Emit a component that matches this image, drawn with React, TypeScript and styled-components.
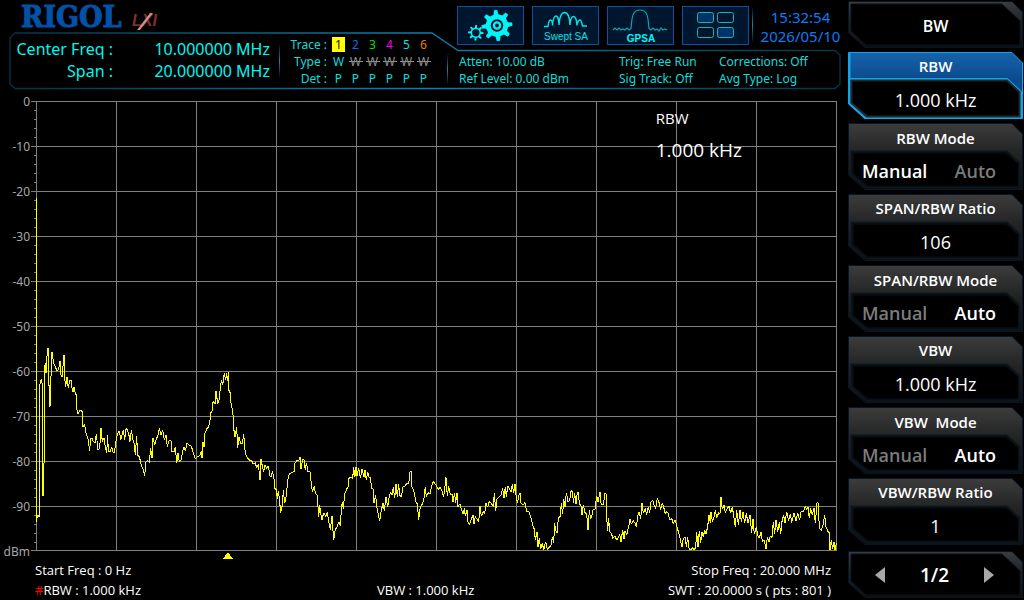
import React from 'react';
import styled, { createGlobalStyle, css } from 'styled-components';

const GlobalStyle = createGlobalStyle`
  * { box-sizing: border-box; }
  body {
    margin: 0;
    background: #000;
    color: #fff;
    font-family: 'Noto Sans', 'Open Sans', sans-serif;
  }
  button { font: inherit; color: inherit; cursor: pointer; }
`;

const Screen = styled.div`
  display: flex;
  min-height: 100vh;
  background: #000;
`;

const Main = styled.main`
  flex: 1;
  min-width: 0;
`;

/* ---------- header ---------- */

const Header = styled.header`
  position: relative;
  display: flex;
  height: 93px;
`;

const PanelFrame = styled.svg`
  position: absolute;
  top: 32px;
  left: 9px;
  width: calc(100% - 16px);
  height: 58px;
  pointer-events: none;
`;

const HeaderLeft = styled.div`
  width: 457px;
  flex: none;
`;

const HeaderRight = styled.div`
  flex: 1;
  min-width: 0;
`;

const Brand = styled.div`
  display: flex;
  align-items: flex-end;
  gap: 10px;
  height: 33px;
  padding: 0 0 0 21px;
`;

const BrandName = styled.span`
  font: bold 30px/33px 'DejaVu Serif Condensed', 'DejaVu Serif', serif;
  color: #0451a8;
  -webkit-text-stroke: 1px #0451a8;
`;

const LxiLogo = styled.svg`
  width: 26px;
  height: 18px;
  margin-bottom: 2px;
`;

const LeftInfo = styled.div`
  display: flex;
  align-items: flex-start;
  color: #00f6f0;
`;

const FreqList = styled.dl`
  display: grid;
  grid-template-columns: 113px 157px;
  margin: 5px 0 0;
  font-size: 16px;
  line-height: 22px;
  text-align: right;
  white-space: nowrap;

  dt, dd { margin: 0; }
`;

const Divider = styled.div<{ $h: number }>`
  width: 1px;
  height: ${(p) => p.$h}px;
  background: linear-gradient(#001018, #1a86b0, #001018);
`;

const FreqDivider = styled(Divider)`
  margin: 12px 0 0 9px;
`;

const TraceDivider = styled(Divider)`
  margin: 22px 0 0 15px;
`;

const TraceTable = styled.table`
  width: 152px;
  margin: 3px 0 0;
  table-layout: fixed;
  border-collapse: collapse;
  font-size: 12px;
  line-height: 15px;
  color: #10dcdc;

  th, td { padding: 0; height: 17px; font-weight: 400; text-align: center; }
  tr > th:first-child { width: 50px; padding-right: 3px; text-align: right; white-space: nowrap; }
`;

const TraceNumber = styled.span<{ $color: string; $active?: boolean }>`
  display: block;
  width: 13px;
  margin: 0 auto;
  color: ${(p) => p.$color};
  ${(p) => p.$active && css`background: #ffff00;`}
`;

const TraceType = styled.span<{ $off?: boolean }>`
  position: relative;
  display: block;
  ${(p) => p.$off && css`
    color: #909090;
    &::after {
      content: '';
      position: absolute;
      top: 7px;
      left: 2px;
      right: 1px;
      height: 1px;
      background: #909090;
    }
  `}
`;

const TopBar = styled.div`
  display: flex;
  align-items: flex-start;
  height: 52px;
  padding-top: 6px;
`;

const Tools = styled.nav`
  display: flex;
  gap: 8px;
`;

const Tool = styled.button`
  display: flex;
  width: 67px;
  height: 39px;
  padding: 0;
  border: 1px solid #0b519c;
  background: #00152e;

  svg { display: block; width: 65px; height: 37px; }
`;

const ClockDivider = styled(Divider)`
  margin: 2px 0 0 3px;
`;

const Clock = styled.time`
  flex: 1;
  padding: 2px 0 0;
  font-size: 15px;
  line-height: 19px;
  text-align: center;
  color: #0a7cf5;

  span { display: block; }
`;

const Settings = styled.div`
  display: grid;
  grid-template-columns: 160px 100px 1fr;
  padding: 1px 0 0 2px;
  font-size: 12px;
  line-height: 17px;
  color: #10dcdc;
  white-space: nowrap;
`;

/* ---------- chart ---------- */

const Chart = styled.section`
  position: relative;
  display: flex;
  padding-right: 11px;
`;

const Axis = styled.div`
  width: 31px;
  padding: 1px 1px 0 0;
  font-size: 12px;
  line-height: 16px;
  text-align: right;
  color: #a8a8a8;
`;

const AxisLabel = styled.div`
  height: 45px;
  &:last-child { height: 16px; }
`;

const Plot = styled.svg`
  display: block;
  flex: 1;
  min-width: 0;
  height: 460px;
  margin-top: 6px;
`;

const Readout = styled.div`
  position: absolute;
  top: 13px;
  right: 106px;
  font-family: 'Open Sans', sans-serif;
  font-size: 19px;
  line-height: 24px;

  strong {
    display: block;
    margin-bottom: 8px;
    font-size: 15px;
    font-weight: 500;
  }
`;

const Footer = styled.footer`
  display: grid;
  grid-template-columns: 342px 1fr auto;
  padding: 0 17px 0 35px;
  font-family: 'Open Sans', sans-serif;
  font-size: 13px;
  line-height: 20px;
  white-space: nowrap;

  em { font-style: normal; color: #f00; }
`;

const FootCell = styled.span<{ $align?: string }>`
  text-align: ${(p) => p.$align || 'left'};
`;

/* ---------- soft keys ---------- */

const Sidebar = styled.aside`
  display: flex;
  flex: none;
  flex-direction: column;
  gap: 4px;
  width: 176px;
  padding-top: 1px;
  font-family: 'Open Sans', sans-serif;
`;

const keyBox = css<{ $short?: boolean }>`
  position: relative;
  display: block;
  width: 175px;
  height: ${(p) => (p.$short ? 47 : 67)}px;
  padding: 0;
  border: 0;
  background: none;
  text-align: center;
`;

const KeyButton = styled.button`${keyBox}`;
const KeyPanel = styled.div<{ $short?: boolean }>`
  ${keyBox}
  &:last-child { margin-top: 2px; }
`;

const KeyFrame = styled.svg`
  position: absolute;
  inset: 0;
  width: 100%;
  height: 100%;
`;

const KeyTitle = styled.span`
  position: relative;
  display: block;
  height: 28px;
  font-size: 15px;
  font-weight: 600;
  line-height: 24px;
  white-space: pre;
`;

const KeyValue = styled.span`
  position: relative;
  display: block;
  font-size: 18px;
  line-height: 36px;
`;

const KeyOptions = styled.span`
  position: relative;
  display: flex;
  justify-content: space-between;
  padding: 0 27px 0 14px;
  font-size: 18px;
  font-weight: 600;
  line-height: 34px;
`;

const KeyOption = styled.span<{ $on: boolean }>`
  color: ${(p) => (p.$on ? '#fff' : '#7c7c7c')};
`;

const MenuTitle = styled.h1`
  position: relative;
  margin: 0;
  font-size: 16px;
  font-weight: 600;
  line-height: 50px;
`;

const Pager = styled.div`
  position: relative;
  display: flex;
  align-items: center;
  justify-content: space-between;
  height: 48px;
  padding: 0 27px 0 25px;
  font-size: 19px;
  font-weight: 600;
`;

const PageButton = styled.button`
  padding: 0;
  border: 0;
  background: none;
  svg { display: block; width: 14px; height: 18px; }
`;

/* ---------- drawings ---------- */

const gearPath = (cx: number, cy: number, outer: number, inner: number, teeth: number, phase: number) => {
  const step = (Math.PI * 2) / teeth;
  const pts: string[] = [];
  for (let i = 0; i < teeth; i++) {
    const a = i * step + phase;
    [
      [-0.27, inner],
      [-0.14, outer],
      [0.14, outer],
      [0.27, inner],
    ].forEach(([d, r]) => {
      pts.push(`${(cx + Math.sin(a + d * step) * r).toFixed(2)},${(cy - Math.cos(a + d * step) * r).toFixed(2)}`);
    });
  }
  return `M${pts.join('L')}Z`;
};

const GearsIcon = () => (
  <svg viewBox="0 0 65 37">
    <g fill="#00f6f6">
      <path d={gearPath(39, 18.5, 15.5, 11.3, 8, -0.09)} />
      <path d={gearPath(17.8, 25.7, 7.8, 5.2, 8, 0.05)} />
    </g>
    <circle cx="39" cy="18.5" r="6.2" fill="#00152e" />
    <circle cx="39" cy="18.5" r="3.1" fill="none" stroke="#00f6f6" strokeWidth="2.4" />
    <circle cx="17.8" cy="25.7" r="3.7" fill="#00152e" />
  </svg>
);

const SweptIcon = () => (
  <svg viewBox="0 0 65 37">
    <path
      d="M11 19.5H15C15.5 15 16 13 17.5 13S19.5 17 19.5 18.5C20 12 21 9 23 9S26 14 26 18C26.5 10 28 5.5 31.5 5.5S37 11 37 18C37.5 12 38.5 9.5 40.5 9.5S44 14 44 18.5C44.5 15 45.5 13 47 13S49 17 49.5 19H54"
      fill="none"
      stroke="#00e6e6"
      strokeWidth="1.4"
    />
    <text x="33" y="33" textAnchor="middle" fontFamily="Liberation Sans, sans-serif" fontSize="10" fill="#10e0e0">
      Swept SA
    </text>
  </svg>
);

const GpsaIcon = () => (
  <svg viewBox="0 0 65 37">
    <path
      d="M5 23L7 21L9 23L11 21L13 23L15 22L17 23L19 21L21 23L23 21.5C24 14 23 3 32 3S40 14 41 21.5L43 23L45 21L47 23L49 22L51 24L53 21L55 23L57 22L59 23"
      fill="none"
      stroke="#0ba5ad"
      strokeWidth="1.2"
    />
    <text x="33" y="35" textAnchor="middle" fontFamily="Liberation Sans, sans-serif" fontWeight="bold" fontSize="10" fill="#00f6f6">
      GPSA
    </text>
  </svg>
);

const WindowsIcon = () => (
  <svg viewBox="0 0 65 37">
    <g stroke="#10b8b8" strokeWidth="1" fill="#00152e">
      <rect x="14.5" y="5.5" width="16" height="10" rx="2" fill="#003468" />
      <rect x="34.5" y="5.5" width="16" height="10" rx="2" />
      <rect x="14.5" y="20.5" width="16" height="10" rx="2" />
      <rect x="34.5" y="20.5" width="16" height="10" rx="2" fill="#003468" />
    </g>
  </svg>
);

const Frame = ({ selected, short }: { selected?: boolean; short?: boolean }) => {
  if (short) {
    return (
      <KeyFrame viewBox="0 0 175 47" preserveAspectRatio="none" aria-hidden="true">
        <defs>
          <linearGradient id="shortFill" x1="0" y1="0" x2="0" y2="1">
            <stop offset="0" stopColor="#3a3c3e" />
            <stop offset="0.5" stopColor="#1c2022" />
            <stop offset="1" stopColor="#0c1012" />
          </linearGradient>
        </defs>
        <path d="M.5 .5H164L174.5 11V46.5H17L.5 32Z" fill="url(#shortFill)" stroke="#081420" />
        <path d="M3 3H154L172 20V44H18L3 30Z" fill="#000" stroke="#06131f" />
      </KeyFrame>
    );
  }
  return (
    <KeyFrame viewBox="0 0 175 67" preserveAspectRatio="none" aria-hidden="true">
      <defs>
        <linearGradient id="keyFill" x1="0" y1="0" x2="0" y2="1">
          <stop offset="0" stopColor="#3c3c3c" />
          <stop offset="0.42" stopColor="#242526" />
          <stop offset="1" stopColor="#0b0f11" />
        </linearGradient>
        <linearGradient id="keyFillOn" x1="0" y1="0" x2="0" y2="1">
          <stop offset="0" stopColor="#1762ab" />
          <stop offset="0.42" stopColor="#0b4a8e" />
          <stop offset="1" stopColor="#0a4c8c" />
        </linearGradient>
      </defs>
      <path
        d="M.5 .5H164L174.5 11V66.5H17L.5 52Z"
        fill={selected ? 'url(#keyFillOn)' : 'url(#keyFill)'}
        stroke={selected ? '#12a4e6' : '#071626'}
      />
      {selected && <path d="M1.5 1V27H159L173 40V66H17L1.5 51.5V27" fill="none" stroke="#12a4e6" strokeWidth="2" />}
      <path d="M3.5 28.5H159L171.5 40V64.5H19L3.5 51Z" fill="#000" stroke={selected ? '#23282a' : '#0f1618'} strokeWidth="2" />
      {!selected && <path d="M5 30H158L170.5 41V63H20L5 50Z" fill="none" stroke="#04121f" />}
    </KeyFrame>
  );
};

/* Sweep samples, three units per screen pixel; every part starts at its own origin. */
const sweep: { x: number; y: number; points: string }[] = [
  {
    x: 0,
    y: 990,
    points:
      '109,-395 109,576 113,555 117,560 119,555 119,172 121,152 124,149 127,165 127,495 130,498 130,400 133,398 133,105 136,128 137,98 140,130 140,90 143,55 146,56 146,165 149,168 149,230 152,225 152,140 155,135 155,67 158,70 160,100 163,103 167,112 170,122 173,123 177,112 180,92 182,134 187,142 191,76 194,79 194,142 197,170 201,140 205,175 209,152 214,150 217,185 220,186 222,170 226,190 229,195 230,235 234,252 240,240 247,245 248,290 254,284 258,310 264,328 269,362 272,325 277,325 280,335 285,338 289,312 294,360 299,355 303,295 307,335 312,325 316,350 320,370 323,315 325,365 330,365 335,350 338,365 343,368 349,325 354,310 358,302 362,330 366,315 370,300 374,330 378,296 382,300 386,310 390,335 394,300 398,325 402,340 406,375 410,318 413,375 418,380 424,405 430,420 434,438 438,395 444,392 448,398 452,355 456,385 459,325 464,345 468,330 474,315 478,295 483,315 488,300 493,330 498,315 502,350 508,330 515,335 516,365 522,365 526,350 530,400 534,370 538,395 543,390 548,365 552,350 556,362 561,340 568,345 574,348 580,370 586,386 592,380 600,376 604,362 606,384 609,335 612,352 615,310 621,295 626,290 630,270 632,248 636,245 638,218 642,215 646,222 648,183 653,220 656,218 660,185 664,150 668,165 673,130 677,150 680,130 683,152 685,126 686,180 690,187',
  },
  {
    x: 690,
    y: 1080,
    points:
      '0,97 3,130 6,145 9,165 11,205 15,230 20,200 23,265 27,230 32,250 37,252 41,222 45,270 49,288 54,295 58,300 65,303 70,312 76,308 80,325 85,312 90,360 93,298 97,318 101,335 105,315 110,325 115,318 120,348 124,350 127,332 132,355 134,385 139,390 142,418 145,392 149,425 152,458 157,435 160,390 164,430 168,410 171,385 175,350 180,340 186,338 192,335 195,310 202,300 206,303 210,290 213,328 218,298 222,300 226,330 229,308 234,335 240,335 244,370 247,395 253,378 256,400 261,405 263,425 266,470 269,435 273,465 276,480 281,458 287,470 292,455 296,485 301,510 306,468 311,540 316,508 322,500 326,485 331,498 334,450 337,425 340,448 344,402 349,390 354,380 357,355 362,352 368,355 371,322 375,350 378,320 381,348 386,325 391,355 396,328 402,350 405,330 409,360 413,335 417,352 421,352 425,385 430,388 432,430 437,405 440,440 445,462 449,483 453,455 459,430 463,452 468,412 473,440 477,415 481,398 486,405 490,380 494,415 498,372 502,410 506,372 509,405 514,412 519,380 524,380 530,370 536,372 540,335 544,335 546,380 553,398 557,425 562,432 566,480 571,440 577,432 582,415 586,380 589,412 594,398 600,402 604,382 610,365 615,372 620,378 625,388 631,382 637,395 641,412 648,352 652,408 656,378 661,405 666,402 669,425 674,400 677,428 681,398 684,440 690,432 694,448 699,462 703,445 706,468 711,450 713,485 718,495 723,480 729,465 732,492 736,470 741,478 746,485 750,438 754,468 760,455 764,460 768,430 773,442 777,425 784,430 790,440 793,400 797,452 801,418 806,412 813,405 818,385 822,415 826,380 829,412 833,378 838,385 843,395 847,372 851,400 855,372 858,405 862,430 868,400 870,400',
  },
  {
    x: 1560,
    y: 1380,
    points:
      '0,100 3,130 10,135 15,128 20,155 27,155 30,165 35,180 38,195 43,208 46,240 51,215 54,262 58,235 62,268 67,248 71,270 77,245 82,268 88,262 93,255 97,232 101,250 104,190 107,212 111,218 115,175 121,168 124,130 128,163 131,118 135,140 139,98 144,125 149,122 153,92 158,95 160,130 164,100 168,132 172,98 175,98 178,130 183,138 186,165 190,135 195,158 200,162 204,210 208,150 212,178 216,165 219,150 225,148 230,108 234,125 240,95 243,130 248,135 251,130 254,100 258,100 260,170 263,212 266,175 269,215 275,222 278,235 285,228 290,240 295,232 299,222 303,245 308,210 312,238 315,212 320,225 326,200 330,178 334,192 340,182 345,190 349,200 354,165 358,155 362,178 366,130 370,160 376,145 380,165 385,140 389,158 393,125 399,122 403,138 407,145 412,115 418,130 422,150 427,128 431,140 435,160 440,155 444,158 449,180 455,175 460,192 465,180 471,200 475,215 481,238 486,262 490,235 495,232 499,260 503,230 507,265 512,270 517,262 522,270 527,262 530,215 534,262 538,212 542,248 546,215 550,232 554,210 558,222 563,200 567,165 571,190 573,155 577,185 582,170 586,150 590,175 596,158 600,160 603,112 607,148 612,135 616,158 622,145 627,138 632,160 637,140 641,168 646,200 650,150 655,195 660,150 664,185 669,155 674,190 679,160 684,190 690,165 695,218 699,178 703,222 709,200 713,225 718,235 723,215 727,245 733,240 738,268 742,230 747,245 751,228 756,232 760,185 764,222 768,180 773,215 778,185 782,222 786,185 791,165 795,190 800,155 806,182 811,162 815,188 822,158 828,182 833,160 839,180 843,155 850,155 856,140 860,150 864,140 868,175 872,145 877,165 882,145 886,190 891,128 895,130 898,205 904,212 909,195 914,165 918,200 924,215 928,218 930,270 934,240 938,268 942,245 945,270 949,250',
  },
];

const vLines = Array.from({ length: 11 }, (_, i) => 36.5 + i * 80);
const hLines = Array.from({ length: 11 }, (_, i) => (i === 10 ? 550.5 : 101.5 + i * 45));
const ticks = Array.from({ length: 50 }, (_, i) => 101.5 + i * 9);

const Spectrum = () => (
  <Plot viewBox="31 99 806 460" preserveAspectRatio="none" shapeRendering="crispEdges" role="img" aria-label="Spectrum">
    <g stroke="#808080" strokeWidth="1">
      {vLines.map((x) => <line key={x} x1={x} x2={x} y1="101" y2="551" />)}
      {hLines.map((y) => <line key={y} x1="31" x2="837" y1={y} y2={y} />)}
      {ticks.map((y) => <line key={y} x1="34" x2="36" y1={y} y2={y} />)}
    </g>
    <g transform="scale(0.33333)" fill="none" stroke="#ffff00" strokeLinejoin="bevel">
      {sweep.map((s) => (
        <polyline key={s.x} transform={`translate(${s.x} ${s.y})`} points={s.points} vectorEffect="non-scaling-stroke" />
      ))}
    </g>
    <path d="M228 552L233 559H223Z" fill="#ffff00" />
  </Plot>
);

/* ---------- content ---------- */

const traces = [
  { id: 1, color: '#202020', type: 'W', active: true },
  { id: 2, color: '#0a6cf0', type: 'W' },
  { id: 3, color: '#00e000', type: 'W' },
  { id: 4, color: '#f000f0', type: 'W' },
  { id: 5, color: '#00e6e6', type: 'W' },
  { id: 6, color: '#f07800', type: 'W' },
];

const levels = ['0', '-10', '-20', '-30', '-40', '-50', '-60', '-70', '-80', '-90', 'dBm'];

const softKeys: { title: string; value?: string; mode?: 'Manual' | 'Auto'; selected?: boolean }[] = [
  { title: 'RBW', value: '1.000 kHz', selected: true },
  { title: 'RBW Mode', mode: 'Manual' },
  { title: 'SPAN/RBW Ratio', value: '106' },
  { title: 'SPAN/RBW Mode', mode: 'Auto' },
  { title: 'VBW', value: '1.000 kHz' },
  { title: 'VBW  Mode', mode: 'Auto' },
  { title: 'VBW/RBW Ratio', value: '1' },
];

export default function App() {
  return (
    <Screen>
      <GlobalStyle />
      <Main>
        <Header>
          <PanelFrame viewBox="0 0 832 58" preserveAspectRatio="none" aria-hidden="true">
            <defs>
              <linearGradient id="panelEdge" x1="0" x2="1" y1="0" y2="0">
                <stop offset="0" stopColor="#033444" />
                <stop offset="0.5" stopColor="#0f7fb0" />
                <stop offset="1" stopColor="#033444" />
              </linearGradient>
            </defs>
            <path
              d="M6 1H423L449 18.5H826L831 23V52L826 56.5H6L1 52V6Z"
              fill="none"
              stroke="url(#panelEdge)"
              strokeWidth="1.3"
            />
          </PanelFrame>
          <HeaderLeft>
            <Brand>
              <BrandName>RIGOL</BrandName>
              <LxiLogo viewBox="0 0 26 18" role="img" aria-label="LXI">
                <text x="0" y="13" fontFamily="Liberation Sans, sans-serif" fontStyle="italic" fontWeight="bold" fontSize="16" fill="#7e302b">
                  LXI
                </text>
                <path d="M5 17L18 0H21L8 17Z" fill="#c98f8a" />
              </LxiLogo>
            </Brand>
            <LeftInfo>
              <FreqList>
                <dt>Center Freq :</dt>
                <dd>10.000000 MHz</dd>
                <dt>Span :</dt>
                <dd>20.000000 MHz</dd>
              </FreqList>
              <FreqDivider $h={32} />
              <TraceTable>
                <tbody>
                  <tr>
                    <th scope="row">Trace :</th>
                    {traces.map((t) => (
                      <td key={t.id}><TraceNumber $color={t.color} $active={t.active}>{t.id}</TraceNumber></td>
                    ))}
                  </tr>
                  <tr>
                    <th scope="row">Type :</th>
                    {traces.map((t) => (
                      <td key={t.id}><TraceType $off={!t.active}>{t.type}</TraceType></td>
                    ))}
                  </tr>
                  <tr>
                    <th scope="row">Det :</th>
                    {traces.map((t) => <td key={t.id}>P</td>)}
                  </tr>
                </tbody>
              </TraceTable>
              <TraceDivider $h={29} />
            </LeftInfo>
          </HeaderLeft>
          <HeaderRight>
            <TopBar>
              <Tools>
                <Tool aria-label="System settings"><GearsIcon /></Tool>
                <Tool><SweptIcon /></Tool>
                <Tool><GpsaIcon /></Tool>
                <Tool aria-label="Windows"><WindowsIcon /></Tool>
              </Tools>
              <ClockDivider $h={34} />
              <Clock>
                <span>15:32:54</span>
                <span>2026/05/10</span>
              </Clock>
            </TopBar>
            <Settings>
              <span>Atten: 10.00 dB</span>
              <span>Trig: Free Run</span>
              <span>Corrections: Off</span>
              <span>Ref Level: 0.00 dBm</span>
              <span>Sig Track: Off</span>
              <span>Avg Type: Log</span>
            </Settings>
          </HeaderRight>
        </Header>

        <Chart>
          <Axis>
            {levels.map((l) => <AxisLabel key={l}>{l}</AxisLabel>)}
          </Axis>
          <Spectrum />
          <Readout>
            <strong>RBW</strong>
            1.000 kHz
          </Readout>
        </Chart>

        <Footer>
          <FootCell>Start Freq : 0 Hz</FootCell>
          <FootCell />
          <FootCell $align="right">Stop Freq : 20.000 MHz</FootCell>
          <FootCell><em>#</em>RBW : 1.000 kHz</FootCell>
          <FootCell>VBW : 1.000 kHz</FootCell>
          <FootCell $align="right">SWT : 20.0000 s ( pts : 801 )</FootCell>
        </Footer>
      </Main>

      <Sidebar>
        <KeyPanel $short>
          <Frame short />
          <MenuTitle>BW</MenuTitle>
        </KeyPanel>
        {softKeys.map((k) => (
          <KeyButton key={k.title}>
            <Frame selected={k.selected} />
            <KeyTitle>{k.title}</KeyTitle>
            {k.mode ? (
              <KeyOptions>
                <KeyOption $on={k.mode === 'Manual'}>Manual</KeyOption>
                <KeyOption $on={k.mode === 'Auto'}>Auto</KeyOption>
              </KeyOptions>
            ) : (
              <KeyValue>{k.value}</KeyValue>
            )}
          </KeyButton>
        ))}
        <KeyPanel $short>
          <Frame short />
          <Pager>
            <PageButton aria-label="Previous page">
              <svg viewBox="0 0 14 18"><path d="M2 9L12 1V17Z" fill="#a8a8a8" /></svg>
            </PageButton>
            <span>1/2</span>
            <PageButton aria-label="Next page">
              <svg viewBox="0 0 14 18"><path d="M12 9L2 1V17Z" fill="#a8a8a8" /></svg>
            </PageButton>
          </Pager>
        </KeyPanel>
      </Sidebar>
    </Screen>
  );
}
